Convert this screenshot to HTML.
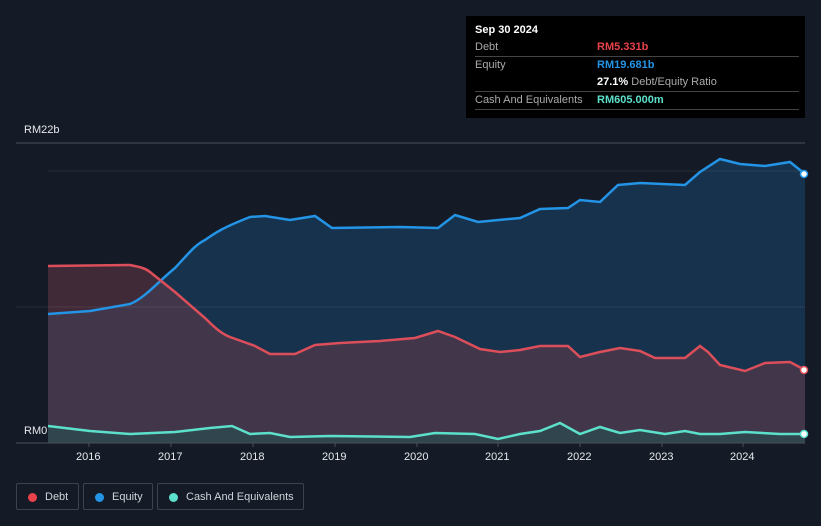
<!DOCTYPE html><html><head><style>
body{margin:0;background:#151b26;width:821px;height:526px;overflow:hidden;font-family:"Liberation Sans",sans-serif;position:relative}
.tt{position:absolute;left:466px;top:16px;width:339px;height:102px;background:#000;color:#fff;font-size:11px}
.tt .r{position:absolute;left:9px;right:6px;height:17px;border-bottom:1px solid #444;line-height:17px}
.lg{position:absolute;top:483px;height:27px;border:1px solid #3c4350;border-radius:2px;color:#cfd3da;font-size:11px;line-height:27px;box-sizing:border-box;white-space:nowrap}
.lg i{position:absolute;left:11px;top:9px;width:9px;height:9px;border-radius:50%}
.lg span{position:absolute;left:28px}
.ax{position:absolute;color:#e6e8ec;font-size:11px}
</style></head><body>
<svg width="821" height="526" style="position:absolute;left:0;top:0">
<line x1="16" y1="143" x2="805" y2="143" stroke="#4a505c"/>
<path d="M48,314 L90,311 L130,304 C145,298 160,280 175,268 C190,252 195,245 205,240 C215,233 222,228 250,217 L265,216 L290,220 L315,216 L332,228 L400,227 L438,228 L455,215 L478,222 L520,218 L540,209 L568,208 L580,200 L600,202 L618,185 L640,183 L685,185 L700,172 L720,159 L740,164 L765,166 L790,162 L805,174 L805,443 L48,443Z" fill="#17324d"/>
<path d="M48,266 L130,265 C140,267 145,268 150,272 L175,292 L205,318 C215,328 222,334 230,337 L255,346 L270,354 L295,354 L315,345 L340,343 L380,341 L415,338 L438,331 L455,337 L480,349 L500,352 L520,350 L540,346 L568,346 L580,357 L600,352 L620,348 L640,351 L655,358 L685,358 L700,346 L708,352 L720,365 L745,371 L765,363 L790,362 L805,370 L805,443 L48,443Z" fill="#6e3a4a" fill-opacity="0.5"/>
<path d="M48,426 L90,431 L130,434 L175,432 L210,428 L232,426 L250,434 L270,433 L290,437 L330,436 L410,437 L435,433 L475,434 L498,439 L520,434 L540,431 L560,423 L580,434 L600,427 L620,433 L640,430 L665,434 L685,431 L700,434 L720,434 L745,432 L780,434 L805,434 L805,443 L48,443Z" fill="#2c4a4e" fill-opacity="0.8"/>
<line x1="48" y1="171" x2="805" y2="171" stroke="#ffffff" stroke-opacity="0.08"/>
<line x1="16" y1="307" x2="805" y2="307" stroke="#ffffff" stroke-opacity="0.08"/>
<path d="M48,314 L90,311 L130,304 C145,298 160,280 175,268 C190,252 195,245 205,240 C215,233 222,228 250,217 L265,216 L290,220 L315,216 L332,228 L400,227 L438,228 L455,215 L478,222 L520,218 L540,209 L568,208 L580,200 L600,202 L618,185 L640,183 L685,185 L700,172 L720,159 L740,164 L765,166 L790,162 L805,174" fill="none" stroke="#2394e6" stroke-width="2.5"/>
<path d="M48,266 L130,265 C140,267 145,268 150,272 L175,292 L205,318 C215,328 222,334 230,337 L255,346 L270,354 L295,354 L315,345 L340,343 L380,341 L415,338 L438,331 L455,337 L480,349 L500,352 L520,350 L540,346 L568,346 L580,357 L600,352 L620,348 L640,351 L655,358 L685,358 L700,346 L708,352 L720,365 L745,371 L765,363 L790,362 L805,370" fill="none" stroke="#dc4f5a" stroke-width="2.5"/>
<path d="M48,426 L90,431 L130,434 L175,432 L210,428 L232,426 L250,434 L270,433 L290,437 L330,436 L410,437 L435,433 L475,434 L498,439 L520,434 L540,431 L560,423 L580,434 L600,427 L620,433 L640,430 L665,434 L685,431 L700,434 L720,434 L745,432 L780,434 L805,434" fill="none" stroke="#5ce0cc" stroke-width="2.5"/>
<line x1="16" y1="443" x2="805" y2="443" stroke="#4a505c"/>
<g stroke="#4a505c"><line x1="89" y1="443" x2="89" y2="447"/><line x1="171" y1="443" x2="171" y2="447"/><line x1="253" y1="443" x2="253" y2="447"/><line x1="335" y1="443" x2="335" y2="447"/><line x1="417" y1="443" x2="417" y2="447"/><line x1="498" y1="443" x2="498" y2="447"/><line x1="580" y1="443" x2="580" y2="447"/><line x1="662" y1="443" x2="662" y2="447"/><line x1="743" y1="443" x2="743" y2="447"/></g>
<circle cx="804" cy="174" r="3.5" fill="#fff" stroke="#2394e6" stroke-width="1.5"/>
<circle cx="804" cy="370" r="3.5" fill="#fff" stroke="#e0505a" stroke-width="1.5"/>
<circle cx="804" cy="434" r="3.5" fill="#fff" stroke="#5ce0cc" stroke-width="1.5"/>
</svg>
<div class="ax" style="left:24px;top:124px">RM22b</div>
<div class="ax" style="left:24px;top:425px">RM0</div>
<div class="ax" style="left:76px;top:451px">2016</div><div class="ax" style="left:158px;top:451px">2017</div><div class="ax" style="left:240px;top:451px">2018</div><div class="ax" style="left:322px;top:451px">2019</div><div class="ax" style="left:404px;top:451px">2020</div><div class="ax" style="left:485px;top:451px">2021</div><div class="ax" style="left:567px;top:451px">2022</div><div class="ax" style="left:649px;top:451px">2023</div><div class="ax" style="left:730px;top:451px">2024</div>
<div class="tt">
<div style="position:absolute;left:9px;top:8px;font-weight:bold">Sep 30 2024</div>
<div class="r" style="top:23px"><span style="color:#aaa">Debt</span><b style="position:absolute;left:122px;color:#e8424a">RM5.331b</b></div>
<div class="r" style="top:41px;border:none"><span style="color:#aaa">Equity</span><b style="position:absolute;left:122px;color:#2394e6">RM19.681b</b></div>
<div class="r" style="top:58px"><span style="position:absolute;left:122px;color:#aaa"><b style="color:#fff">27.1%</b> Debt/Equity Ratio</span></div>
<div class="r" style="top:76px"><span style="color:#aaa">Cash And Equivalents</span><b style="position:absolute;left:122px;color:#5ce0cc">RM605.000m</b></div>
</div>
<div class="lg" style="left:16px;width:63px"><i style="background:#e8424a"></i><span>Debt</span></div>
<div class="lg" style="left:83px;width:70px"><i style="background:#2394e6"></i><span>Equity</span></div>
<div class="lg" style="left:157px;width:147px"><i style="background:#5ce0cc"></i><span>Cash And Equivalents</span></div>
</body></html>
